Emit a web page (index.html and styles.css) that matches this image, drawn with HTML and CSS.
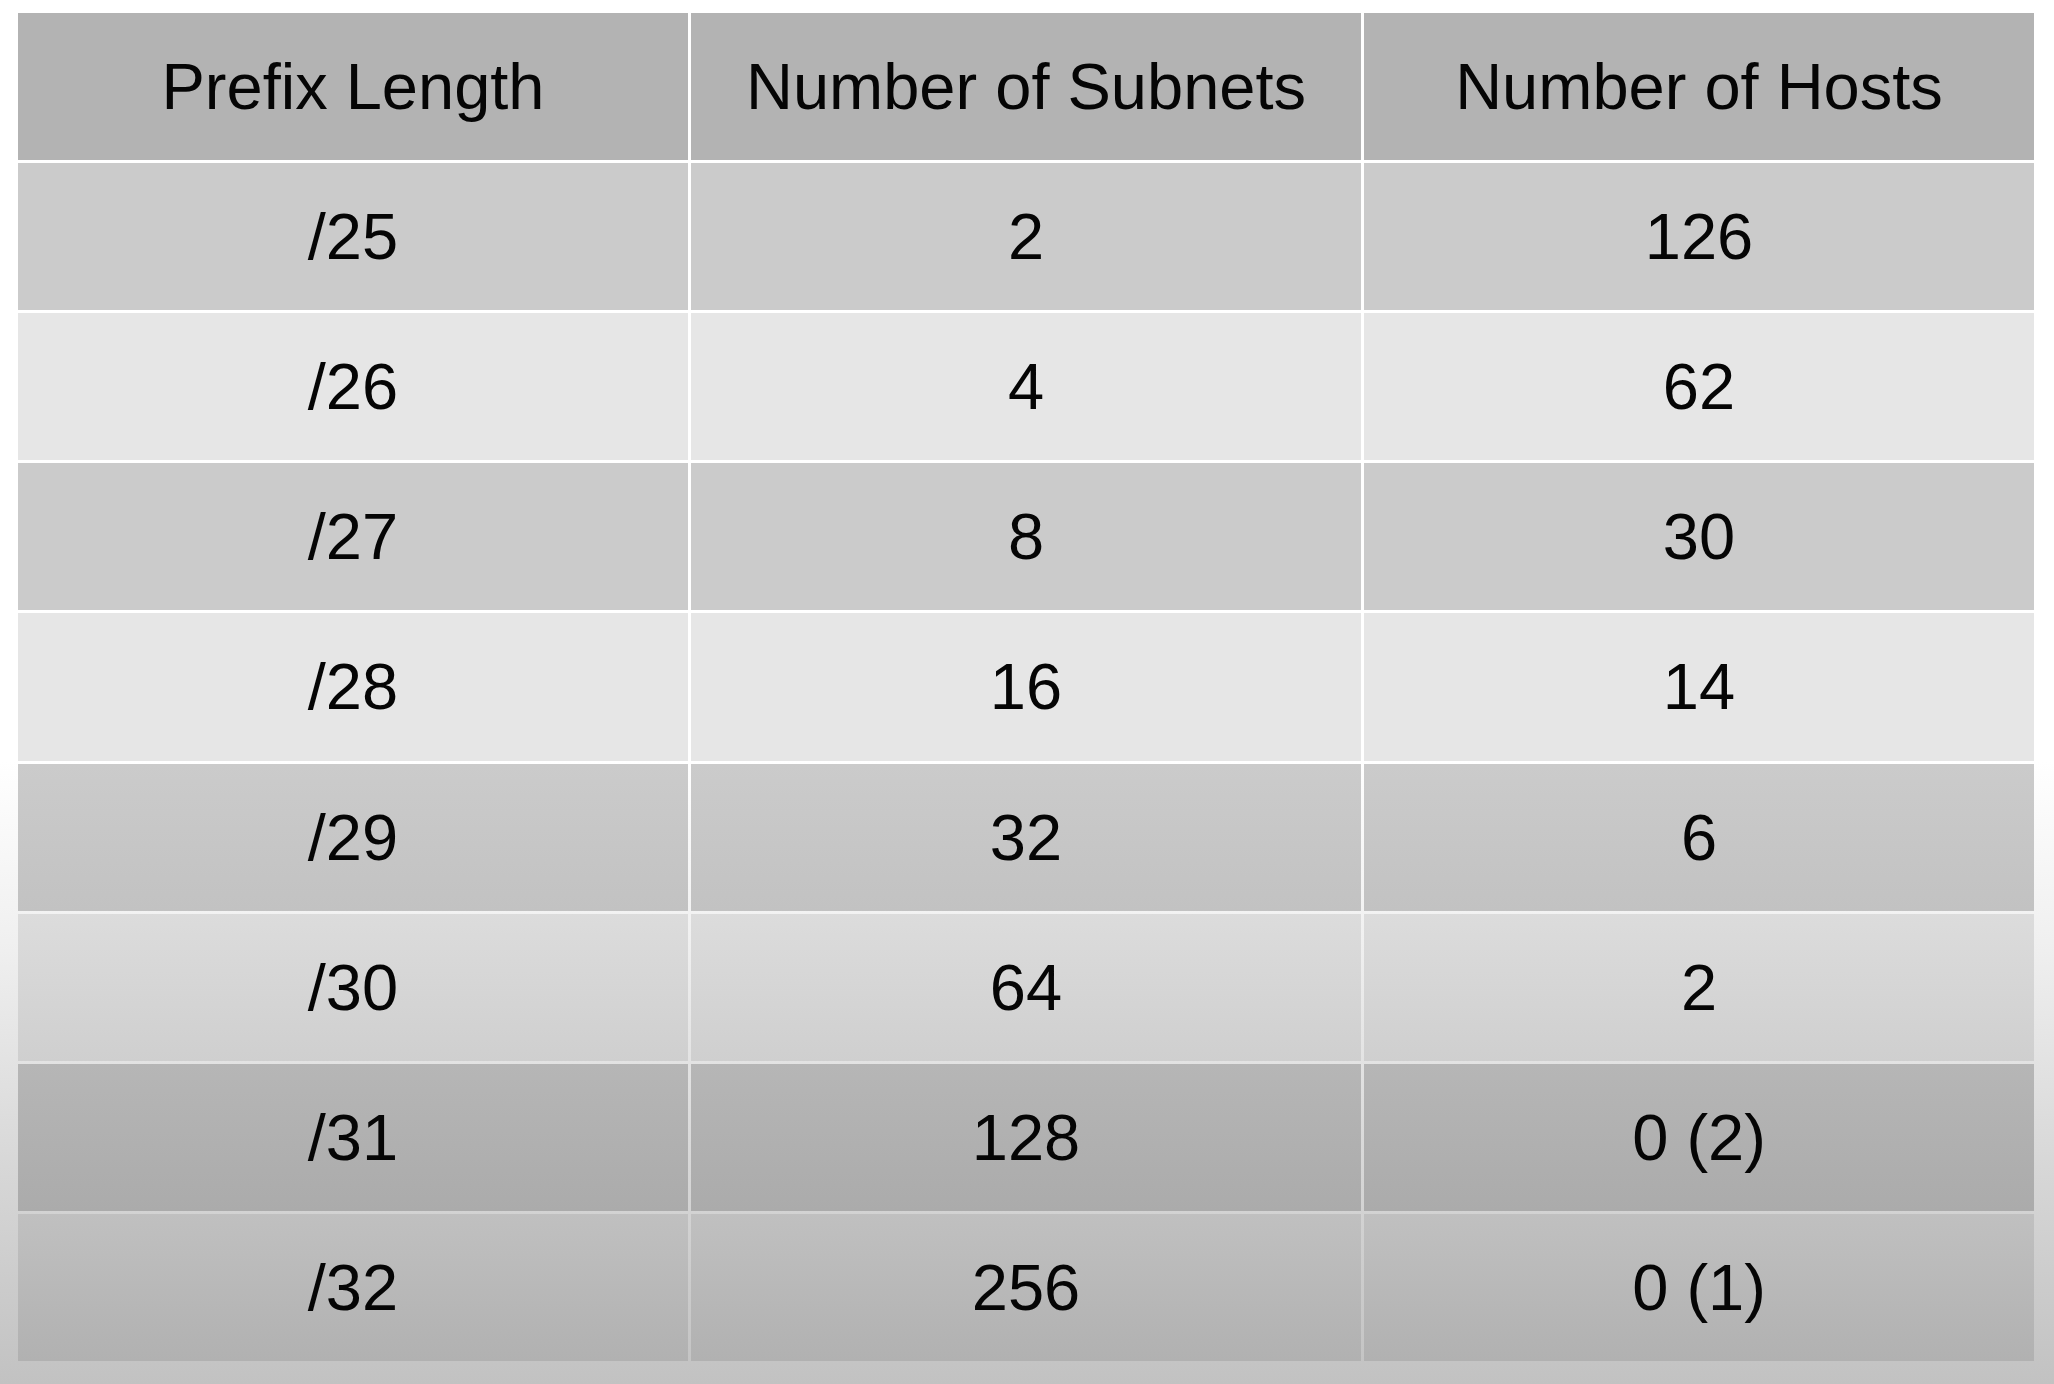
FILE: index.html
```html
<!DOCTYPE html>
<html lang="en">
<head>
<meta charset="utf-8">
<title>Subnetting Table</title>
<link rel="stylesheet" href="styles.css">
</head>
<body>
<main class="slide">
  <div class="table">
    <div class="cell head">Prefix Length</div>
    <div class="cell head">Number of Subnets</div>
    <div class="cell head">Number of Hosts</div>

    <div class="cell r1">/25</div><div class="cell r1">2</div><div class="cell r1">126</div>
    <div class="cell r2">/26</div><div class="cell r2">4</div><div class="cell r2">62</div>
    <div class="cell r3">/27</div><div class="cell r3">8</div><div class="cell r3">30</div>
    <div class="cell r4">/28</div><div class="cell r4">16</div><div class="cell r4">14</div>
    <div class="cell r5">/29</div><div class="cell r5">32</div><div class="cell r5">6</div>
    <div class="cell r6">/30</div><div class="cell r6">64</div><div class="cell r6">2</div>
    <div class="cell r7">/31</div><div class="cell r7">128</div><div class="cell r7">0 (2)</div>
    <div class="cell r8">/32</div><div class="cell r8">256</div><div class="cell r8">0 (1)</div>
  </div>
</main>
</body>
</html>
```

FILE: styles.css
```css
html, body {
  margin: 0;
  padding: 0;
  height: 100%;
}

body {
  background: linear-gradient(to bottom, #ffffff 0%, #ffffff 55%, #f0f0f0 68%, #d6d6d6 85%, #c2c2c2 100%);
  font-family: "Liberation Sans", Arial, sans-serif;
  color: #050505;
}

.slide {
  box-sizing: border-box;
  height: 1384px;
  padding: 13px 20px 23px 18px;
}

.table {
  height: 100%;
  display: grid;
  grid-template-columns: repeat(3, 1fr);
  grid-template-rows: repeat(9, 1fr);
  gap: 3px;
}

.cell {
  display: flex;
  align-items: center;
  justify-content: center;
  font-size: 65px;
  line-height: 1;
}

.head { background: #b3b3b3; }
.r1 { background: #cbcbcb; }
.r2 { background: #e6e6e6; }
.r3 { background: #cbcbcb; }
.r4 { background: #e6e6e6; }
.r5 { background: linear-gradient(to bottom, #cbcbcb, #c2c2c2); }
.r6 { background: linear-gradient(to bottom, #dcdcdc, #cfcfcf); }
.r7 { background: linear-gradient(to bottom, #b6b6b6, #ababab); }
.r8 { background: linear-gradient(to bottom, #c0c0c0, #b1b1b1); }
```
